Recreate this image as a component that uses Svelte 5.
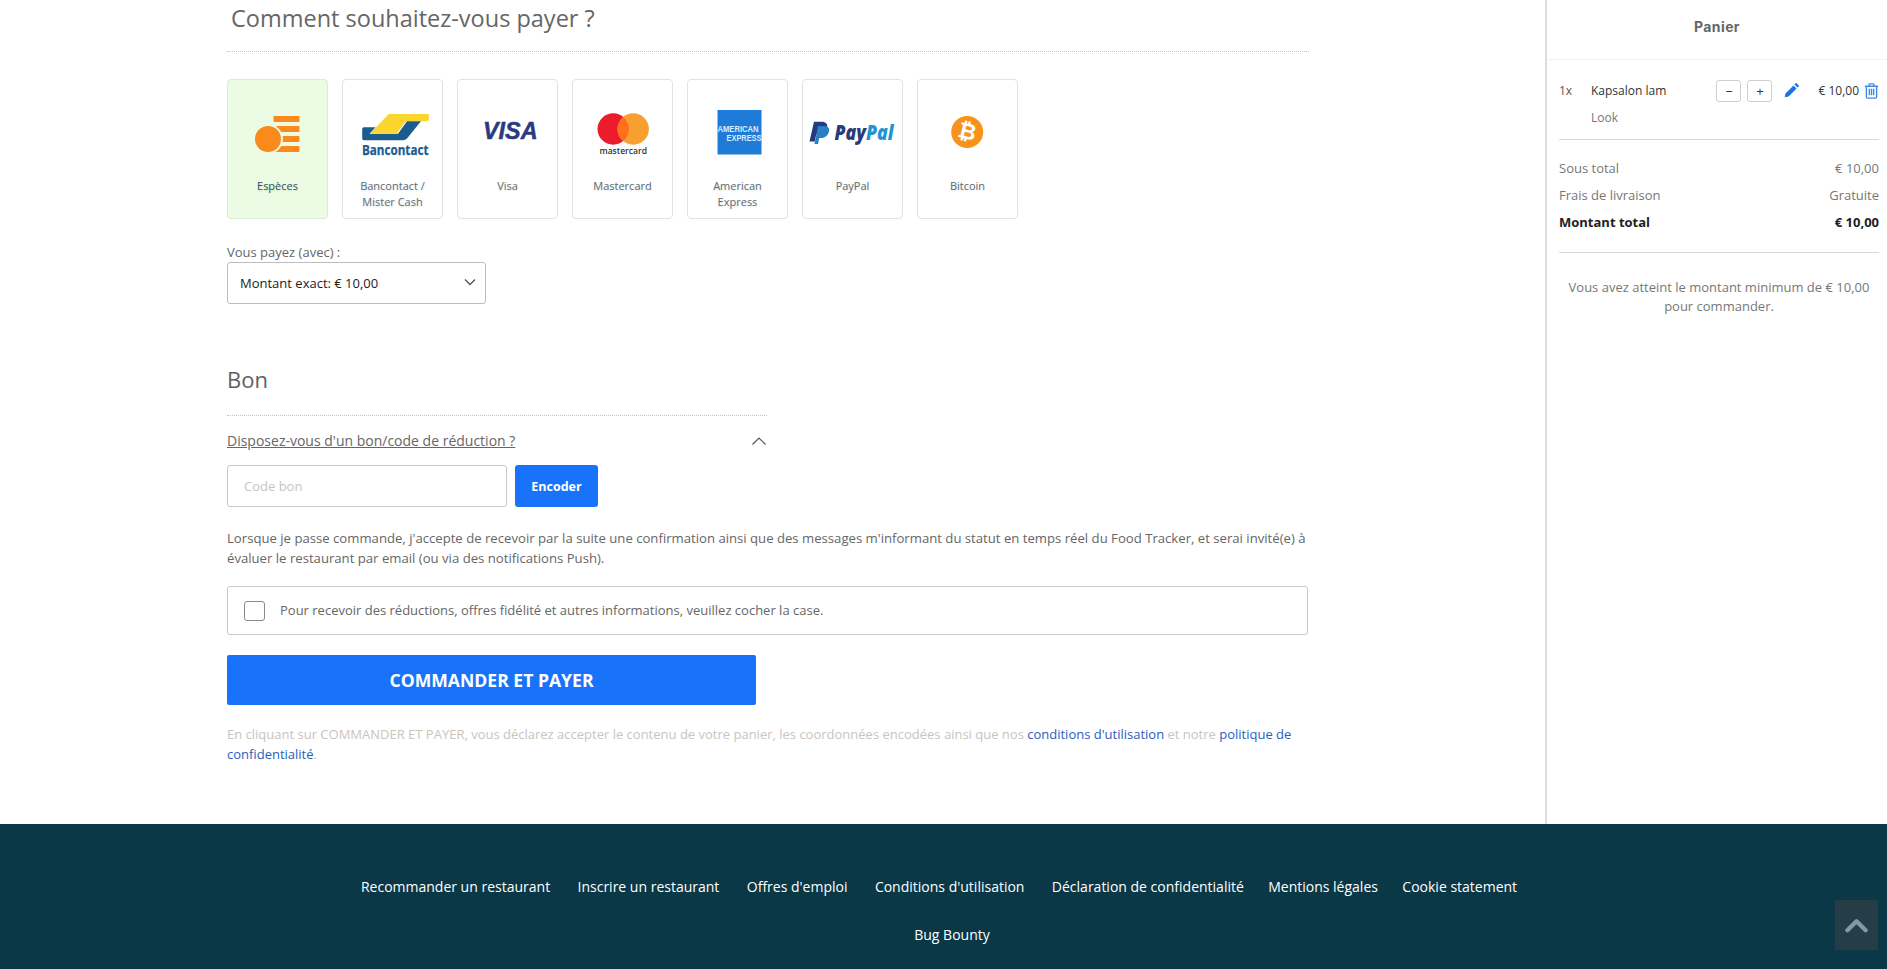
<script>
  const links = [
    { t: 'Recommander un restaurant' },
    { t: 'Inscrire un restaurant' },
    { t: "Offres d'emploi" },
    { t: "Conditions d'utilisation" },
    { t: 'Déclaration de confidentialité' },
    { t: 'Mentions légales', tight: true },
    { t: 'Cookie statement', tight: true }
  ];
</script>

<div class="page">
  <div class="top">
    <main class="main">
      <h1 class="title">Comment souhaitez-vous payer ?</h1>

      <div class="cards">
        <div class="card active">
          <svg class="logo" viewBox="0 0 80 60">
            <rect x="35.5" y="14" width="26" height="6" rx="1" fill="#fa8a1c" />
            <rect x="35.5" y="24" width="26" height="6" rx="1" fill="#fa8a1c" />
            <rect x="35.5" y="34" width="26" height="6" rx="1" fill="#fa8a1c" />
            <rect x="35.5" y="44" width="26" height="6" rx="1" fill="#fa8a1c" />
            <circle cx="30" cy="37" r="15" fill="#ecfbe3" />
            <circle cx="30" cy="37" r="13" fill="#fa8a1c" />
          </svg>
          <div class="label">Espèces</div>
        </div>

        <div class="card">
          <svg class="logo" viewBox="0 0 80 60">
            <path d="M35.8 12H75.8V18.7L73 19.3H53L44 31H17.5Z" fill="#fbd52d" />
            <path d="M11 25.3H22.5L16.5 31.7H45L54 19.3H68L54 36.5Q52.5 38.3 50 38.3H11Q9.2 38.3 9.2 36.5V27Q9.2 25.3 11 25.3Z" fill="#1c5b8e" />
            <text class="bc" x="9" y="53" textLength="66.5" lengthAdjust="spacingAndGlyphs">Bancontact</text>
          </svg>
          <div class="label">Bancontact /<br />Mister Cash</div>
        </div>

        <div class="card">
          <svg class="logo" viewBox="0 0 80 60">
            <text class="visa" x="15" y="37" textLength="54.5" lengthAdjust="spacingAndGlyphs">VISA</text>
          </svg>
          <div class="label">Visa</div>
        </div>

        <div class="card">
          <svg class="logo" viewBox="0 0 80 60">
            <circle cx="30.2" cy="27" r="15.7" fill="#eb1c2d" />
            <circle cx="50.2" cy="27" r="15.7" fill="#f7a030" />
            <path d="M40.2 14.9A15.7 15.7 0 0 1 40.2 39.1A15.7 15.7 0 0 1 40.2 14.9Z" fill="#ff6f1c" />
            <text class="mc" x="16.5" y="52" textLength="47.5" lengthAdjust="spacingAndGlyphs">mastercard</text>
          </svg>
          <div class="label">Mastercard</div>
        </div>

        <div class="card">
          <svg class="logo" viewBox="0 0 80 60">
            <rect x="19.5" y="8" width="44" height="44.5" fill="#1f7bd8" />
            <text class="amex" x="19.5" y="29.5" textLength="41" lengthAdjust="spacingAndGlyphs">AMERICAN</text>
            <text class="amex" x="28.5" y="39" textLength="35" lengthAdjust="spacingAndGlyphs">EXPRESS</text>
          </svg>
          <div class="label">American<br />Express</div>
        </div>

        <div class="card">
          <svg class="logo" viewBox="0 0 80 60">
            <path d="M1 19.7H8.5C13 19.7 15 22 14 26C13 30 10 32.5 5.5 32.5H3.2L1.8 39.5H-3.5Z" fill="#253b80" />
            <path d="M5 24H10C15 24 17 26 16 29.5C15 33.5 12 36 8 36H6.2L5 42H1.5Z" fill="#2a7fc4" />
            <text class="pp" x="21.5" y="38" textLength="59" lengthAdjust="spacingAndGlyphs"><tspan class="pay">Pay</tspan><tspan class="pal">Pal</tspan></text>
          </svg>
          <div class="label">PayPal</div>
        </div>

        <div class="card">
          <svg class="logo" viewBox="0 0 80 60">
            <circle cx="39.2" cy="30" r="16" fill="#f7931a" />
            <text class="btc" x="39.2" y="37" transform="rotate(14 39.2 30)">₿</text>
          </svg>
          <div class="label">Bitcoin</div>
        </div>
      </div>

      <label class="pay-label" for="amount">Vous payez (avec) :</label>
      <div class="select-wrap">
        <select id="amount" class="select">
          <option>Montant exact: € 10,00</option>
        </select>
        <svg class="chev" viewBox="0 0 12 8"><path d="M1 1.5L6 6.5L11 1.5" fill="none" stroke="#555" stroke-width="1.4" /></svg>
      </div>

      <section class="voucher">
        <h2 class="bon">Bon</h2>
        <div class="disclosure">
          <a class="dlink" href="#top">Disposez-vous d'un bon/code de réduction ?</a>
          <svg class="up" viewBox="0 0 16 10"><path d="M1.5 8.5L8 2L14.5 8.5" fill="none" stroke="#555" stroke-width="1.2" /></svg>
        </div>
        <div class="code-row">
          <input class="code" placeholder="Code bon" />
          <button class="encode">Encoder</button>
        </div>
      </section>

      <p class="notice">Lorsque je passe commande, j'accepte de recevoir par la suite une confirmation ainsi que des messages m'informant du statut en temps réel du Food Tracker, et serai invité(e) à évaluer le restaurant par email (ou via des notifications Push).</p>

      <label class="optin">
        <input class="check" type="checkbox" />
        <span>Pour recevoir des réductions, offres fidélité et autres informations, veuillez cocher la case.</span>
      </label>

      <button class="cta">COMMANDER ET PAYER</button>

      <p class="legal">En cliquant sur COMMANDER ET PAYER, vous déclarez accepter le contenu de votre panier, les coordonnées encodées ainsi que nos <a href="#top">conditions d'utilisation</a> et notre <a href="#top">politique de confidentialité</a>.</p>
    </main>

    <aside class="cart">
      <div class="cart-head">Panier</div>
      <div class="cart-body">
        <div class="item">
          <span class="qty">1x</span>
          <div class="item-name">
            <div class="name">Kapsalon lam</div>
            <div class="sub">Look</div>
          </div>
          <div class="item-actions">
            <button class="step">−</button>
            <button class="step">+</button>
            <svg class="pencil" viewBox="0 0 14 14"><path d="M10.6.7L13.3 3.4L11.8 4.9L9.1 2.2ZM8.3 3L11 5.7L4 12.7L.6 13.4L1.3 10Z" fill="#1a73e8" /></svg>
            <span class="price">€ 10,00</span>
            <svg class="trash" viewBox="0 0 14 15"><path d="M.8 3H13.2M4.7 3V1.6Q4.7 .8 5.5 .8H8.5Q9.3 .8 9.3 1.6V3M2.2 3V12.8Q2.2 14.2 3.6 14.2H10.4Q11.8 14.2 11.8 12.8V3M5 5.5V11.6M7 5.5V11.6M9 5.5V11.6" fill="none" stroke="#3f8bec" stroke-width="1.3" /></svg>
          </div>
        </div>

        <div class="totals">
          <div class="row"><span>Sous total</span><span>€ 10,00</span></div>
          <div class="row"><span>Frais de livraison</span><span>Gratuite</span></div>
          <div class="row strong"><span>Montant total</span><span>€ 10,00</span></div>
        </div>

        <p class="minimum">Vous avez atteint le montant minimum de € 10,00 pour commander.</p>
      </div>
    </aside>
  </div>

  <footer class="footer">
    <div class="links">
      {#each links as l}
        <a class:tight={l.tight} href="#top">{l.t}</a>
      {/each}
    </div>
    <div class="links second"><a href="#top">Bug Bounty</a></div>
  </footer>

  <button class="to-top" aria-label="Haut de page">
    <svg viewBox="0 0 24 16"><path d="M2.5 13.5L12 4L21.5 13.5" fill="none" stroke="#7d9aa6" stroke-width="4.5" stroke-linecap="round" stroke-linejoin="round" /></svg>
  </button>
</div>

<style>
  :global(body) {
    margin: 0;
    background: #fff;
    font-family: "Open Sans", "Liberation Sans", sans-serif;
    overflow: hidden;
  }
  a { text-decoration: none; color: inherit; }
  button, input, select { font-family: inherit; }

  .page { height: 969px; display: flex; flex-direction: column; }
  .top { display: flex; height: 824px; }

  .main { width: 1082px; margin-left: 227px; margin-right: 236px; flex: none; }
  .title {
    margin: 0;
    height: 51px;
    padding-left: 4px;
    font-size: 23.5px;
    line-height: 37px;
    font-weight: 400;
    color: #666;
    border-bottom: 1px dotted #c4c4c4;
  }

  .cards { display: flex; gap: 14px; margin-top: 27px; }
  .card {
    width: 101px;
    height: 140px;
    box-sizing: border-box;
    flex: none;
    border: 1px solid #e2e2e2;
    border-radius: 4px;
    padding-top: 22px;
    display: flex;
    flex-direction: column;
    align-items: center;
  }
  .card.active { background: #ecfbe3; border-color: #dcebd2; }
  .logo { width: 80px; height: 60px; overflow: visible; flex: none; }
  .label {
    margin-top: 16px;
    font-size: 11px;
    line-height: 16px;
    color: #5b6d75;
    text-align: center;
    text-shadow: 0 1px 2px rgba(0, 0, 0, .12);
  }
  .active .label { color: #33505a; }

  .bc { font: 700 14.5px "Open Sans", sans-serif; fill: #1c5b8e; stroke: #1c5b8e; stroke-width: .25px; }
  .visa { font: italic 700 24px "Liberation Sans", sans-serif; fill: #2b3a7e; stroke: #2b3a7e; stroke-width: .5px; }
  .mc { font: 600 9.5px "Open Sans", sans-serif; fill: #333; }
  .amex { font: 700 9.5px "Liberation Sans", sans-serif; fill: #dcecfb; }
  .pp { font: italic 800 21px "Open Sans", sans-serif; }
  .pay { fill: #2b3a78; }
  .pal { fill: #1f94d2; }
  .btc { font: 700 22px "DejaVu Sans", sans-serif; fill: #fff; text-anchor: middle; }

  .pay-label {
    display: block;
    margin-top: 24px;
    font-size: 13px;
    line-height: 18px;
    color: #666;
    height: 19px;
  }
  .select-wrap { position: relative; width: 259px; height: 42px; }
  .select {
    appearance: none;
    width: 100%;
    height: 100%;
    padding: 0 12px;
    border: 1px solid #bdbdbd;
    border-radius: 3px;
    background: #fff;
    font-size: 13px;
    color: #222;
  }
  .chev { position: absolute; right: 10px; top: 16px; width: 12px; height: 8px; pointer-events: none; }

  .voucher { margin-top: 54px; width: 540px; }
  .bon {
    margin: 0;
    height: 58px;
    box-sizing: border-box;
    font-size: 22px;
    line-height: 42px;
    font-weight: 400;
    color: #5f5f5f;
    border-bottom: 1px dotted #c4c4c4;
  }
  .disclosure { display: flex; justify-content: space-between; align-items: center; height: 49px; }
  .dlink { font-size: 14px; color: #666; text-decoration: underline; }
  .up { width: 16px; height: 10px; }
  .code-row { display: flex; gap: 8px; }
  .code {
    width: 280px;
    height: 42px;
    box-sizing: border-box;
    padding: 0 16px;
    border: 1px solid #c9c9c9;
    border-radius: 3px;
    font-size: 13px;
  }
  .code::placeholder { color: #c8c4c0; opacity: 1; }
  .encode {
    width: 83px;
    height: 42px;
    border: 0;
    border-radius: 3px;
    background: #1973fa;
    color: #fff;
    font-size: 12.5px;
    font-weight: 700;
  }

  .notice {
    margin: 21px 0 0;
    font-size: 13.15px;
    line-height: 20px;
    color: #666;
  }
  .optin {
    margin-top: 18px;
    width: 1081px;
    height: 49px;
    box-sizing: border-box;
    display: flex;
    align-items: center;
    gap: 15px;
    padding-left: 16px;
    border: 1px solid #c9c9c9;
    border-radius: 3px;
    font-size: 13px;
    line-height: 16px;
    color: #666;
  }
  .optin span { margin-top: -2px; }
  .check {
    appearance: none;
    margin: 0;
    width: 21px;
    height: 20px;
    border: 1px solid #8a8a8a;
    border-radius: 3px;
    background: #fff;
  }
  .cta {
    display: block;
    margin-top: 20px;
    width: 529px;
    height: 50px;
    border: 0;
    border-radius: 2px;
    background: #1973fa;
    color: #fff;
    font-size: 17.6px;
    font-weight: 700;
  }
  .legal {
    margin: 19px 0 0;
    font-size: 13px;
    line-height: 20px;
    color: #c9c4be;
  }
  .legal a { color: #2a5ebd; }

  .cart {
    flex: 1;
    min-width: 0;
    border-left: 2px solid #dedede;
  }
  .cart-head {
    height: 60px;
    box-sizing: border-box;
    text-align: center;
    font-family: Inter, "Open Sans", sans-serif;
    font-size: 14px;
    letter-spacing: .4px;
    font-weight: 700;
    line-height: 54px;
    color: #666;
    border-bottom: 1px solid #f3f3f3;
  }
  .cart-body { padding: 0 8px 0 12px; }
  .item {
    display: flex;
    height: 80px;
    box-sizing: border-box;
    padding-top: 20px;
    border-bottom: 1px solid #d8d8d8;
    font-size: 12px;
    color: #333;
  }
  .qty { width: 32px; line-height: 22px; color: #555; }
  .item-name { flex: 1; }
  .name { line-height: 22px; }
  .sub { margin-top: 5px; line-height: 22px; color: #777; }
  .item-actions { display: flex; align-items: flex-start; height: 22px; }
  .step {
    width: 25px;
    height: 22px;
    box-sizing: border-box;
    margin-right: 6px;
    padding: 0;
    border: 1px solid #d0d0d0;
    border-radius: 3px;
    background: #fff;
    font-size: 13px;
    line-height: 18px;
    color: #333;
  }
  .pencil { width: 16px; height: 16px; margin: 2px 0 0 6px; }
  .price { margin-left: 18px; line-height: 22px; white-space: nowrap; }
  .trash { width: 15px; height: 16px; margin: 3px 0 0 5px; }

  .totals {
    padding: 15px 0 16px;
    border-bottom: 1px solid #d8d8d8;
    font-size: 13px;
    color: #777;
  }
  .row { display: flex; justify-content: space-between; height: 27px; line-height: 27px; }
  .row.strong { font-weight: 700; color: #222; }
  .minimum {
    margin: 25px 0 0;
    text-align: center;
    font-size: 13px;
    line-height: 19px;
    color: #777;
  }

  .footer {
    height: 145px;
    box-sizing: border-box;
    padding: 53px 9px 0 0;
    background: #0a3847;
    color: #fff;
    font-size: 14px;
    line-height: 20px;
  }
  .links { display: flex; justify-content: center; gap: 27.4px; }
  .links .tight { margin-left: -3px; }
  .second { margin-top: 28px; padding-left: 26px; }

  .to-top {
    position: fixed;
    right: 9px;
    bottom: 19px;
    width: 43px;
    height: 50px;
    padding: 0 10px;
    border: 0;
    background: #263c46;
    display: flex;
    align-items: center;
    justify-content: center;
  }
  .to-top svg { width: 24px; height: 16px; }
</style>
